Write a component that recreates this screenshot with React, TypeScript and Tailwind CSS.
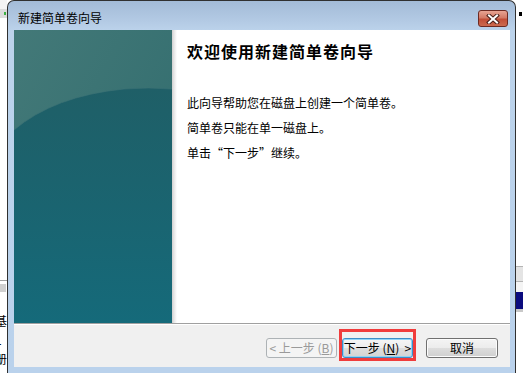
const cjk = { fontFamily: '"Noto Sans CJK SC", "Liberation Sans", sans-serif' };

function LeftBackdrop() {
  return (
    <div className="w-[7px] h-full flex flex-col bg-white overflow-hidden shrink-0">
      <div className="h-[9px] bg-[#f4f4f4]" />
      <div className="h-[9px] bg-[#dcdcdc] flex items-center justify-end pr-[1px]">
        <div className="w-[2px] h-[3px] bg-[#3cb043]" />
      </div>
      <div className="h-[262px] bg-white" />
      <div className="h-[1px] bg-[#a0a0a0]" />
      <div className="h-[3px] bg-white" />
      <div className="h-[8px] bg-[#d0d0d0] w-[6px]" />
      <div className="flex flex-col text-[12px] leading-[19px] text-black -ml-[5px] pt-[19px]">
        <span>基</span>
        <span>1</span>
        <span>册</span>
      </div>
    </div>
  );
}

function RightBackdrop() {
  return (
    <div className="w-[7px] h-full flex flex-col bg-white overflow-hidden shrink-0">
      <div className="h-[12px] bg-white" />
      <div className="h-[4px] w-[3px] ml-[3px] bg-black" />
      <div className="h-[250px] bg-white" />
      <div className="h-[16px] bg-[#e4e4e4] border-y border-[#b4b4b4]" />
      <div className="h-[10px] bg-[#f4f4f4]" />
      <div className="h-[17px] bg-[#0b0b7e]" />
      <div className="h-[3px] bg-[#c8c8c8]" />
      <div className="flex-1 bg-white" />
    </div>
  );
}

function CloseButton() {
  return (
    <div className="w-[30px] h-[17px] rounded-[3px] border border-[#6d2a22] bg-[linear-gradient(to_bottom,#e8a493_0%,#d47a66_45%,#c24e37_55%,#cc6a4f_100%)] flex items-center justify-center">
      <svg width="14" height="10" viewBox="0 0 14 10">
        <path d="M3 1.5 L11 8.5 M11 1.5 L3 8.5" stroke="#4a1f19" strokeWidth="4" strokeLinecap="square" />
        <path d="M3 1.5 L11 8.5 M11 1.5 L3 8.5" stroke="#ffffff" strokeWidth="2" strokeLinecap="square" />
      </svg>
    </div>
  );
}

function TealArt() {
  return (
    <svg width="158" height="293" viewBox="0 0 158 293" className="block">
      <defs>
        <linearGradient id="top" x1="0" y1="0" x2="1" y2="1">
          <stop offset="0" stopColor="#437978" />
          <stop offset="1" stopColor="#2f6b6d" />
        </linearGradient>
        <linearGradient id="bottom" x1="0" y1="0" x2="0" y2="1">
          <stop offset="0" stopColor="#1f5f67" />
          <stop offset="0.5" stopColor="#1a6470" />
          <stop offset="1" stopColor="#156a7a" />
        </linearGradient>
      </defs>
      <rect width="158" height="293" fill="url(#top)" />
      <path d="M0 100 Q 40 66 110 59 Q 135 57 158 59 L158 293 L0 293 Z" fill="url(#bottom)" />
      <path d="M0 100 Q 40 66 110 59 Q 135 57 158 59" stroke="#3d7376" strokeWidth="1" fill="none" opacity="0.6" />
    </svg>
  );
}

function WinButton({
  children,
  variant,
}: {
  children: React.ReactNode;
  variant: "disabled" | "default" | "normal";
}) {
  if (variant === "disabled") {
    return (
      <div className="w-[71px] h-[20px] rounded-[3px] border border-[#adb2b5] bg-[#f4f4f4] text-[#9a9a9a] text-[12px] flex items-center justify-center whitespace-pre">
        {children}
      </div>
    );
  }
  if (variant === "default") {
    return (
      <div className="relative w-[71px] h-[20px] rounded-[3px] border border-[#3c8ec8] bg-[linear-gradient(to_bottom,#f6f6f6_0%,#ececec_50%,#dedede_50%,#d3d3d3_100%)] shadow-[inset_0_0_0_1px_#8fd3f5] text-black text-[12px] flex items-center justify-center whitespace-pre">
        {children}
        <div className="absolute -top-[10px] -bottom-[4px] -left-[4px] -right-[4px] border-[3px] border-[#f03c3c]" />
      </div>
    );
  }
  return (
    <div className="w-[72px] h-[20px] rounded-[3px] border border-[#707070] bg-[linear-gradient(to_bottom,#f4f4f4_0%,#ececec_50%,#dddddd_50%,#d0d0d0_100%)] shadow-[inset_0_0_0_1px_#fcfcfc] text-black text-[12px] flex items-center justify-center">
      {children}
    </div>
  );
}

function Wizard() {
  return (
    <div className="w-[509px] h-[373px] shrink-0 flex flex-col border-x border-t border-[#303030] rounded-t-[7px] bg-[linear-gradient(to_bottom,#a3bbd7_0px,#b3cae4_20px,#bcd3eb_30px,#bad2ec_100%)] overflow-hidden">
      <div className="h-[29px] flex items-start justify-between pl-[10px] pr-[7px]">
        <span className="mt-[8px] text-[12px] leading-[18px] text-black">新建简单卷向导</span>
        <div className="mt-[9px]">
          <CloseButton />
        </div>
      </div>
      <div className="mx-[6px] mr-[5px] h-[337px] flex flex-col">
        <div className="h-[293px] flex bg-white">
          <TealArt />
          <div className="w-[5px] bg-[linear-gradient(to_right,#cfcfcf,#e6e6e6_40%,#ffffff)]" />
          <div className="flex-1 pl-[10px] pt-[11px]">
            <h1 className="text-[16px] leading-[20px] font-bold text-black tracking-[1px]">欢迎使用新建简单卷向导</h1>
            <div className="mt-[33px] flex flex-col gap-[7px] text-[12px] leading-[18px] text-black">
              <p>此向导帮助您在磁盘上创建一个简单卷。</p>
              <p>简单卷只能在单一磁盘上。</p>
              <p>单击“下一步”继续。</p>
            </div>
          </div>
        </div>
        <div className="h-[1px] bg-[#a0a0a0]" />
        <div className="h-[1px] bg-white" />
        <div className="flex-1 bg-[#f0f0f0] flex justify-end items-start pt-[13px] pr-[12px]">
          <div className="flex gap-[5px]">
            <WinButton variant="disabled">{"< 上一步 ("}<u>B</u>{")"}</WinButton>
            <WinButton variant="default">{"下一步 ("}<u>N</u>{")  >"}</WinButton>
          </div>
          <div className="ml-[13px]">
            <WinButton variant="normal">取消</WinButton>
          </div>
        </div>
      </div>
    </div>
  );
}

export default function App() {
  return (
    <div className="w-[523px] h-[373px] flex overflow-hidden bg-white" style={cjk}>
      <LeftBackdrop />
      <Wizard />
      <RightBackdrop />
    </div>
  );
}
